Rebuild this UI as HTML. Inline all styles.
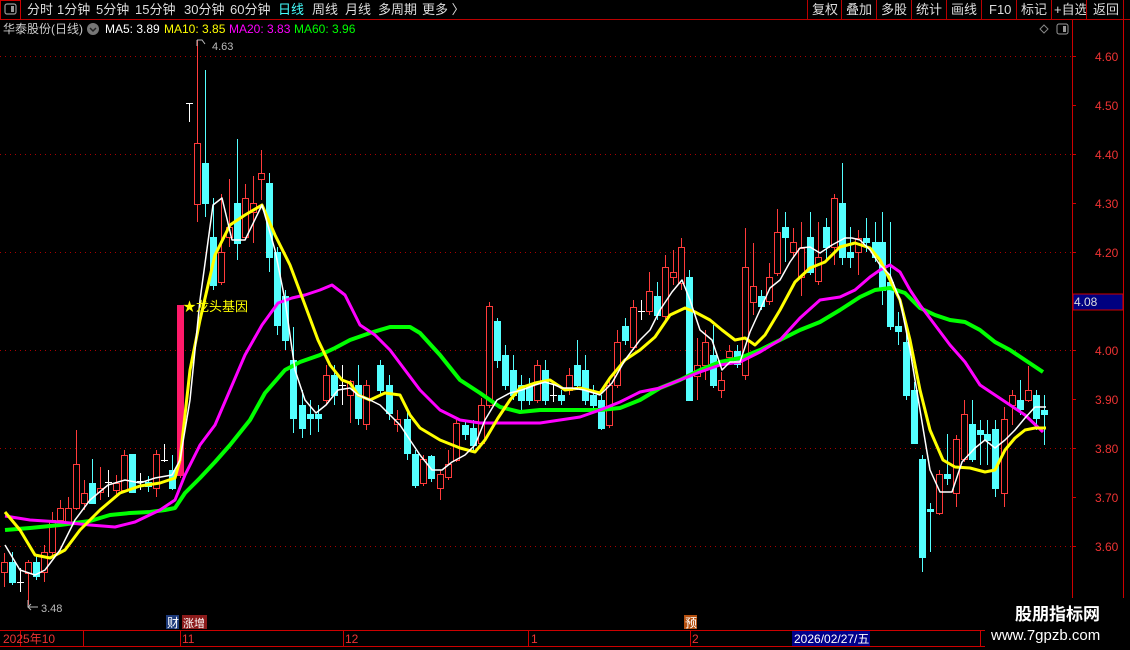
<!DOCTYPE html>
<html><head><meta charset="utf-8"><style>
body{margin:0;width:1130px;height:650px;background:#000;overflow:hidden;font-family:"Liberation Sans","Noto Sans CJK SC",sans-serif;}
svg{position:absolute;left:0;top:0}
</style></head><body>
<svg id="s" width="1130" height="650" xmlns="http://www.w3.org/2000/svg" font-family="Liberation Sans, Noto Sans CJK SC, sans-serif">
<rect width="1130" height="650" fill="#000"/>
<!-- top bar -->
<line x1="0" y1="19.5" x2="1130" y2="19.5" stroke="#b00" stroke-width="1"/>
<rect x="0.5" y="0.5" width="20" height="19" fill="none" stroke="#c00"/>
<rect x="5" y="4" width="11" height="10" rx="2" fill="none" stroke="#999" stroke-width="1.2"/><rect x="11" y="6" width="3" height="6" fill="#999"/>
<g font-size="13" fill="#ddd">
<text x="27" y="14">分时</text><text x="57" y="14">1分钟</text><text x="96" y="14">5分钟</text><text x="135" y="14">15分钟</text><text x="184" y="14">30分钟</text><text x="230" y="14">60分钟</text>
<text x="278" y="14" fill="#4ff">日线</text><text x="312" y="14">周线</text><text x="345" y="14">月线</text><text x="378" y="14">多周期</text><text x="422" y="14">更多 〉</text>
<text x="812" y="14">复权</text><text x="846" y="14">叠加</text><text x="881" y="14">多股</text><text x="916" y="14">统计</text><text x="951" y="14">画线</text><text x="989" y="14">F10</text><text x="1021" y="14">标记</text><text x="1054" y="14">+自选</text><text x="1093" y="14">返回</text>
</g>
<g stroke="#b00"><line x1="807.5" y1="0" x2="807.5" y2="19"/><line x1="841.5" y1="0" x2="841.5" y2="19"/><line x1="876.5" y1="0" x2="876.5" y2="19"/><line x1="911.5" y1="0" x2="911.5" y2="19"/><line x1="946.5" y1="0" x2="946.5" y2="19"/><line x1="981.5" y1="0" x2="981.5" y2="19"/><line x1="1016.5" y1="0" x2="1016.5" y2="19"/><line x1="1051.5" y1="0" x2="1051.5" y2="19"/><line x1="1086.5" y1="0" x2="1086.5" y2="19"/><line x1="1123.5" y1="0" x2="1123.5" y2="19"/></g>
<!-- info line -->
<g font-size="12">
<text x="3" y="33" fill="#ccc">华泰股份(日线)</text>
<circle cx="93" cy="29" r="6" fill="#777"/><path d="M90 28l3 3 3-3" stroke="#222" stroke-width="1.5" fill="none"/>
<text x="105" y="33" fill="#fff">MA5: 3.89</text><text x="164" y="33" fill="#ff0">MA10: 3.85</text><text x="229" y="33" fill="#f0f">MA20: 3.83</text><text x="294" y="33" fill="#0f0">MA60: 3.96</text>
</g>
<path d="M1044 25l4 4-4 4-4-4z" fill="none" stroke="#888"/>
<rect x="1057" y="24" width="11" height="10" rx="2" fill="none" stroke="#999"/><rect x="1063" y="26" width="3" height="6" fill="#999"/>
<!-- right axis -->
<line x1="1072.5" y1="20" x2="1072.5" y2="630" stroke="#c00"/>
<line x1="1123.5" y1="20" x2="1123.5" y2="650" stroke="#c00"/>
<g id="grid" stroke="#a00" stroke-dasharray="1 4"></g>
<g id="axis" font-size="12" fill="#e33"></g>
<rect x="1073" y="294" width="50" height="16" fill="#000080" stroke="#c00"/>
<text x="1074" y="306" font-size="12" fill="#ddd">4.08</text>
<g id="cand"></g>
<g id="lines" fill="none" stroke-linejoin="round"></g>
<!-- annotations -->
<text x="183" y="311" font-size="13" fill="#ff0">★龙头基因</text>
<path d="M197 40v6M197 40h5l3 4" stroke="#bbb" fill="none"/><text x="212" y="50" font-size="11" fill="#bbb">4.63</text>
<path d="M28 600v7h10M31 604l-3 3 3 3" stroke="#bbb" fill="none"/><text x="41" y="612" font-size="11" fill="#bbb">3.48</text>
<rect x="166" y="615" width="13" height="14" fill="#1d3a7a"/><text x="167" y="627" font-size="12" fill="#fff">财</text>
<rect x="182" y="615" width="25" height="14" fill="#8b1a1a"/><text x="183" y="627" font-size="11" fill="#fff">涨增</text>
<rect x="684" y="615" width="13" height="14" fill="#b5500f"/><text x="685" y="627" font-size="12" fill="#fff">预</text>
<!-- bottom axis -->
<line x1="0" y1="630.5" x2="985" y2="630.5" stroke="#c00"/>
<line x1="0" y1="646.5" x2="985" y2="646.5" stroke="#c00"/>
<g stroke="#c00"><line x1="20.5" y1="631" x2="20.5" y2="646"/><line x1="83.5" y1="631" x2="83.5" y2="646"/><line x1="180.5" y1="631" x2="180.5" y2="646"/><line x1="343.5" y1="631" x2="343.5" y2="646"/><line x1="528.5" y1="631" x2="528.5" y2="646"/><line x1="690.5" y1="631" x2="690.5" y2="646"/><line x1="980.5" y1="631" x2="980.5" y2="646"/></g>
<g font-size="12" fill="#e33"><text x="3" y="643">2025年10</text><text x="182" y="643">11</text><text x="345" y="643">12</text><text x="531" y="643">1</text><text x="692" y="643">2</text></g>
<rect x="792" y="631" width="78" height="15" fill="#00008a"/><text x="794" y="643" font-size="12" fill="#fff">2026/02/27/五</text>
<rect x="985" y="598" width="145" height="52" fill="#000"/>
<text x="1015" y="620" font-size="17" font-weight="bold" fill="#fff">股朋指标网</text>
<text x="991" y="640" font-size="15" fill="#fff">www.7gpzb.com</text>
</svg>
<script>
var NS="http://www.w3.org/2000/svg";
function el(p,t,a){var e=document.createElementNS(NS,t);for(var k in a)e.setAttribute(k,a[k]);p.appendChild(e);return e;}
var g=document.getElementById('grid'),ax=document.getElementById('axis');
[56,154,252,350,448,546].forEach(function(y){el(g,'line',{x1:0,y1:y+.5,x2:1072,y2:y+.5});});
var labs=["4.60","4.50","4.40","4.30","4.20","4.10","4.00","3.90","3.80","3.70","3.60"];
labs.forEach(function(l,i){var y=56+i*49;el(ax,'line',{x1:1072,y1:y+.5,x2:1076,y2:y+.5,stroke:'#c00'});if(l!="4.10"){var t=el(ax,'text',{x:1095,y:y+5});t.textContent=l;}});
var C=[
[4,'r',562,572,553,587],[12,'c',562,582,552,585],[20,'w',582,582,568,592],[28,'r',562,573,560,605],[36,'c',562,576,556,580],
[44,'r',552,572,545,582],[52,'r',520,552,512,556],[60,'r',508,520,500,525],[68,'r',508,522,497,525],[76,'r',464,508,430,510],
[84,'r',493,503,480,510],[92,'c',483,503,459,503],[100,'r',488,492,467,500],[108,'w',482,482,470,497],[116,'r',483,490,475,495],
[124,'r',455,490,450,490],[132,'c',454,492,454,492],[140,'w',481,481,473,490],[148,'c',482,486,476,492],[156,'r',454,488,450,497],
[164,'w',460,460,444,462],[172,'c',470,488,455,490],[180,'p',305,475,305,478],[189,'w',103,103,103,122],[197,'r',143,204,40,222],
[205,'c',163,203,70,217],[213,'c',237,285,198,290],[221,'r',252,282,194,285],[229,'r',227,237,179,247],[237,'c',203,243,139,260],
[245,'r',198,237,184,240],[253,'r',203,212,176,243],[261,'r',173,179,150,200],[269,'c',183,257,173,272],[277,'c',252,325,247,335],
[285,'c',296,340,290,350],[293,'c',360,418,327,433],[302,'c',405,428,390,438],[310,'c',414,418,400,435],[318,'c',414,418,405,432],
[326,'r',375,400,365,405],[334,'c',375,395,365,405],[342,'w',385,385,365,405],[350,'r',381,395,380,423],[358,'c',385,418,365,425],
[366,'r',385,424,380,430],[380,'c',365,390,360,395],[389,'c',385,413,375,420],[397,'r',419,424,410,432],[407,'c',419,453,410,460],
[415,'c',454,485,450,488],[423,'r',459,483,455,486],[431,'c',456,478,455,482],[440,'r',474,488,470,500],[448,'r',464,477,450,480],
[456,'r',423,460,420,462],[465,'c',425,434,420,440],[473,'c',428,445,420,450],[481,'r',405,443,398,446],[489,'r',306,405,302,408],
[497,'c',321,360,318,368],[505,'c',355,385,345,390],[513,'c',370,395,355,400],[521,'c',385,400,375,410],[529,'c',385,400,378,405],
[537,'r',365,400,360,403],[545,'c',370,400,360,405],[553,'w',395,395,385,402],[561,'c',395,400,390,405],[569,'r',375,390,368,395],
[577,'c',365,385,340,390],[585,'c',370,400,355,405],[593,'c',395,405,385,410],[601,'c',400,428,395,430],[609,'r',385,425,380,428],
[617,'r',342,385,330,388],[625,'c',326,340,318,345],[633,'r',307,347,300,350],[641,'w',311,311,300,320],[649,'r',291,311,272,315],
[657,'c',296,315,282,320],[665,'r',267,316,255,320],[673,'r',272,277,250,285],[681,'r',247,283,238,290],[689,'c',277,400,270,400],
[697,'r',365,376,338,400],[705,'r',342,365,330,380],[713,'c',355,385,325,388],[721,'r',380,390,372,398],[729,'r',351,357,345,365],
[737,'c',351,364,345,368],[745,'r',267,375,228,380],[753,'r',286,302,243,315],[761,'c',296,306,290,310],[769,'r',277,301,263,305],
[777,'r',232,273,209,276],[785,'c',227,237,212,262],[793,'r',242,252,228,258],[801,'r',248,277,222,296],[810,'c',237,272,212,275],
[818,'r',257,281,222,285],[826,'c',227,247,218,262],[834,'r',198,247,194,265],[842,'c',203,257,163,265],[850,'c',252,257,227,268],
[858,'r',238,252,230,275],[866,'c',238,242,218,252],[875,'c',242,257,222,262],[882,'c',242,290,212,305],[890,'c',282,326,222,330],
[898,'c',326,331,312,345],[906,'c',342,395,322,400],[914,'c',390,443,382,443],[922,'c',459,557,455,572],[930,'c',509,511,503,552],
[939,'r',474,513,470,515],[947,'c',474,478,434,485],[956,'r',439,493,435,507],[964,'r',414,459,400,462],[972,'c',424,459,400,462],
[980,'c',430,434,420,465],[987,'c',434,440,420,465],[995,'c',429,488,420,497],[1004,'r',419,493,407,507],[1012,'r',395,405,390,425],
[1020,'c',400,409,380,415],[1028,'r',390,400,366,402],[1036,'c',395,418,390,430],[1044,'c',410,414,395,445]];
var cg=document.getElementById('cand');
C.forEach(function(c){var x=c[0],t=c[1],o=c[2],cl=c[3],h=c[4],l=c[5];
var col=t=='r'?'#ff3b3b':t=='c'?'#54ffff':t=='p'?'#ff1a6a':'#fff';
el(cg,'line',{x1:x+.5,y1:h,x2:x+.5,y2:l,stroke:col});
if(t=='w'){el(cg,'line',{x1:x-3,y1:o+.5,x2:x+4,y2:o+.5,stroke:col});return;}
var hgt=Math.max(cl-o,2);
if(t=='r')el(cg,'rect',{x:x-2.5,y:o+.5,width:6,height:hgt,fill:'#000',stroke:col});
else el(cg,'rect',{x:x-3,y:o,width:7,height:hgt+1,fill:col});});
function P(a){var s='';for(var i=0;i<a.length;i+=2)s+=a[i]+','+a[i+1]+' ';return s;}
var G=[5,530,30,528,60,525,90,521,110,515,130,513,150,512,165,510,175,508,185,493,200,478,215,462,230,445,250,420,265,393,285,370,300,362,320,355,335,348,350,340,370,333,390,327,410,327,420,333,440,355,460,380,480,393,500,407,520,412,540,410,560,410,580,410,600,410,620,408,640,400,660,388,680,380,700,370,720,362,740,358,760,350,780,340,800,330,820,322,840,310,860,297,875,290,890,288,905,293,920,308,935,315,950,320,965,322,980,330,995,342,1010,350,1025,360,1043,372];
var M=[5,516,30,520,60,522,90,525,115,527,135,522,160,510,175,500,185,475,200,445,215,425,230,390,245,355,262,325,278,303,292,298,305,295,320,290,332,285,345,295,360,325,375,335,390,350,405,370,420,390,440,410,460,420,480,423,500,423,520,423,540,423,560,420,580,417,600,410,620,402,640,392,660,388,680,380,700,372,720,365,740,362,760,352,780,340,800,318,820,300,840,297,855,290,870,277,880,270,890,265,900,272,910,290,920,305,935,325,950,345,965,362,980,385,995,395,1010,405,1025,415,1043,432];
var Y=[5,512,20,530,35,555,50,558,65,550,80,530,100,510,120,493,140,486,160,483,175,478,180,460,190,370,200,320,215,255,230,225,245,215,262,205,275,235,290,265,305,305,318,340,330,365,342,380,350,383,358,395,370,400,385,393,400,395,410,415,420,428,440,440,460,448,475,452,485,440,498,418,510,400,520,388,535,383,550,380,565,390,580,388,600,393,610,378,625,360,640,350,655,337,670,315,685,308,695,312,710,320,722,330,735,340,745,338,755,345,765,335,780,310,795,282,810,268,825,262,840,247,855,243,870,248,880,260,890,280,900,300,910,340,920,390,930,430,943,460,955,467,970,468,985,472,995,470,1005,450,1015,438,1025,430,1035,428,1046,428];
var W=[5,545,20,570,35,575,45,570,60,550,75,520,90,500,108,485,125,480,140,483,155,478,172,475,180,460,190,400,200,300,213,205,222,198,232,240,245,240,262,205,275,250,285,300,295,370,305,400,316,413,326,405,338,390,350,388,358,395,370,400,380,405,390,415,400,425,410,440,420,455,432,470,442,470,452,462,465,455,475,445,485,420,497,400,510,393,522,390,535,385,545,382,555,385,562,388,572,388,584,390,600,395,612,383,625,360,640,340,650,330,660,310,672,292,682,280,690,300,700,330,712,340,722,370,730,362,740,362,750,332,760,310,770,288,780,280,790,262,800,248,810,247,820,253,832,245,845,238,852,238,860,240,870,250,880,265,890,275,900,300,910,350,920,410,930,470,940,492,952,492,962,462,975,448,985,440,995,448,1005,440,1015,430,1025,418,1035,407,1046,407];
var lg=document.getElementById('lines');
el(lg,'polyline',{points:P(G),stroke:'#00ff00','stroke-width':4});
el(lg,'polyline',{points:P(M),stroke:'#ff00ff','stroke-width':3});
el(lg,'polyline',{points:P(Y),stroke:'#ffff00','stroke-width':3});
el(lg,'polyline',{points:P(W),stroke:'#ffffff','stroke-width':1.5});
</script>
</body></html>
